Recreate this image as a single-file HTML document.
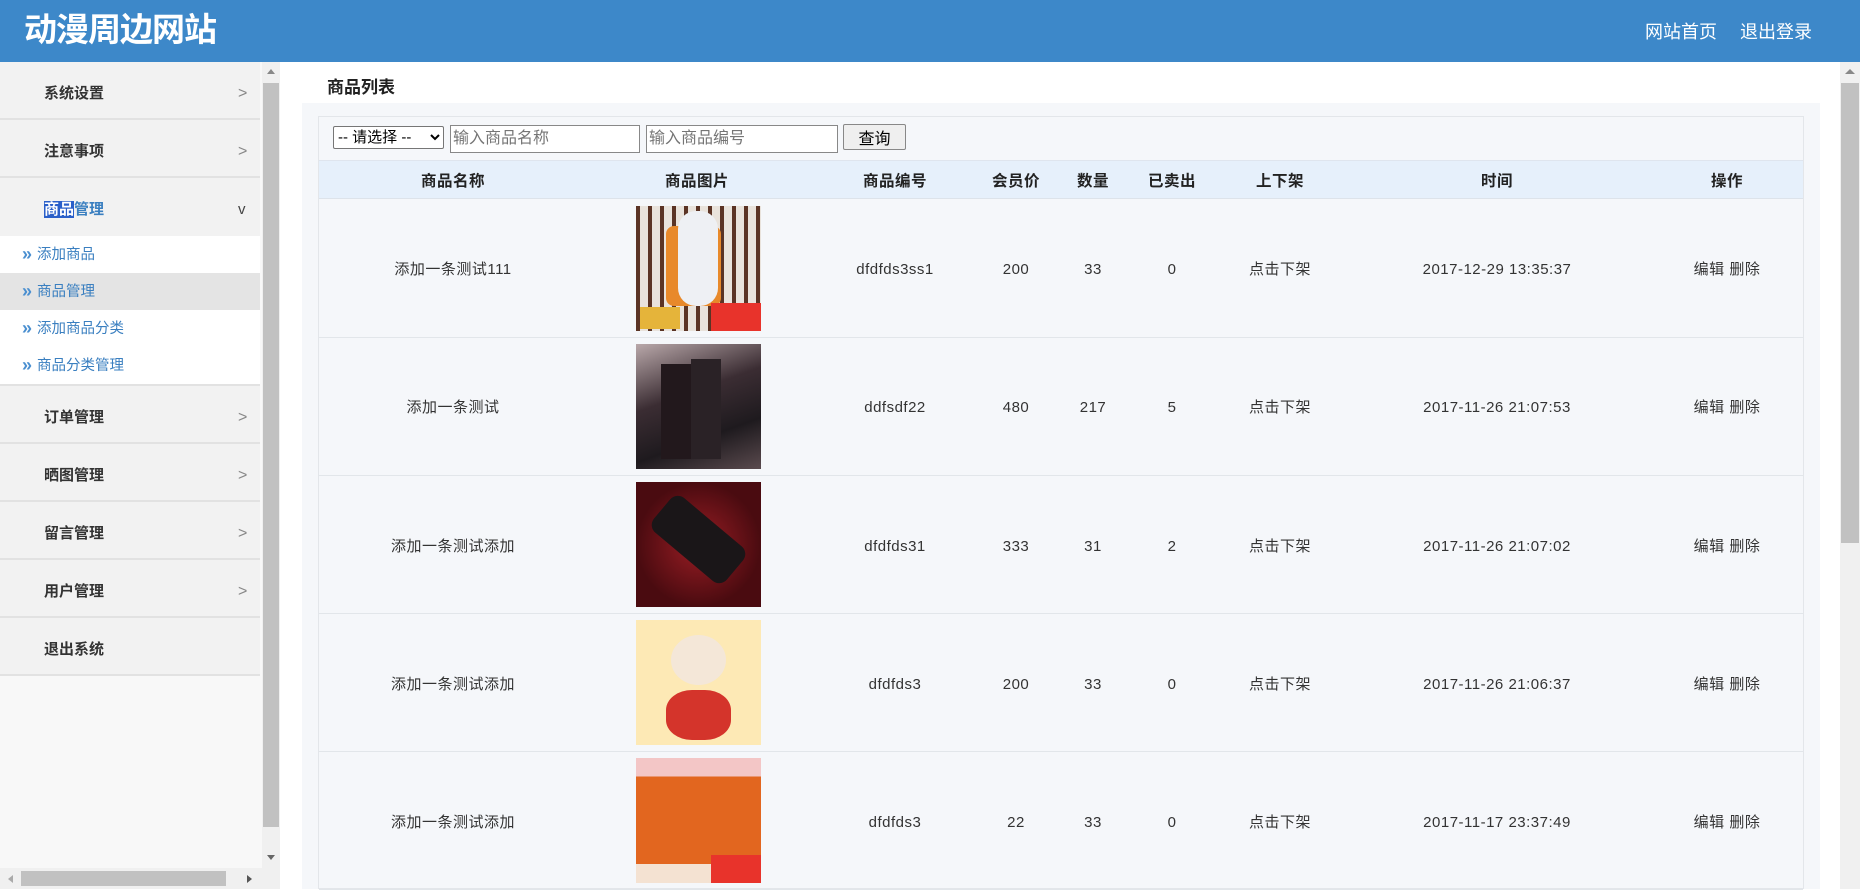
<!DOCTYPE html>
<html><head><meta charset="utf-8"><style>
*{margin:0;padding:0;box-sizing:border-box}
body{width:1860px;height:889px;overflow:hidden;background:#fff;font-family:"Liberation Sans","Noto Sans CJK SC",sans-serif;position:relative;color:#333}
.hd{position:absolute;left:0;top:0;width:1860px;height:62px;background:#3d88c9}
.logo{position:absolute;left:24px;top:8px;color:#fff;font-size:33px;line-height:44px;font-weight:bold;letter-spacing:-1px}
.nav{position:absolute;top:20px;color:#fff;font-size:18px;line-height:24px}
.side{position:absolute;left:0;top:62px;width:262px;height:806px;background:#f8f8f8}
.it{position:absolute;left:0;width:260px;height:58px;background:#f2f2f2;border-bottom:2px solid #e2e2e2;font-size:15px;color:#333;font-weight:bold}
.it span{position:absolute;left:44px;top:22px;line-height:20px}
.it i{position:absolute;left:238px;top:22px;line-height:20px;font-style:normal;color:#888;font-weight:normal;font-size:16px}
.sub{position:absolute;left:0;width:260px;height:37px;font-size:14.5px;color:#3a7fc0}
.sub span{position:absolute;left:37px;top:9px;line-height:20px}
.sub b{position:absolute;left:22px;top:8px;line-height:20px;font-size:18px;color:#4a8fd0}
.vs{position:absolute;left:262px;top:62px;width:18px;height:806px;background:#f0f0f0}
.hs{position:absolute;left:0;top:868px;width:280px;height:21px;background:#f0f0f0}
.ttl{position:absolute;left:327px;top:77px;line-height:22px;font-size:17px;font-weight:bold;color:#222}
.panel{position:absolute;left:302px;top:103px;width:1518px;height:786px;background:#f5f7fa}
.box{position:absolute;left:318px;top:116px;width:1486px;height:773px;border:1px solid #e3e6ea;background:#f5f7fa}
.thd{position:absolute;left:319px;top:160px;width:1484px;height:39px;background:#e6f0fb;border-top:1px solid #dfe5ee;border-bottom:1px solid #dde3ea}
.c{position:absolute;transform:translateX(-50%);white-space:nowrap;font-size:15px;line-height:20px;color:#333;letter-spacing:.5px}
.h{font-weight:bold;top:172px;font-size:15.5px;color:#222}
.row{position:absolute;left:319px;width:1484px;height:138px;border-bottom:1px solid #e2e6ea}
.img{position:absolute;left:636px;width:125px;height:125px;overflow:hidden}
.rs{position:absolute;left:1840px;top:62px;width:20px;height:827px;background:#f0f0f0}
input,select,button{font-family:"Liberation Sans","Noto Sans CJK SC",sans-serif}
</style></head><body>
<div class="hd"><div class="logo">动漫周边网站</div><div class="nav" style="left:1645px">网站首页</div><div class="nav" style="left:1740px">退出登录</div></div>
<div class="side">
<div class="it" style="top:0"><span>系统设置</span><i>&gt;</i></div>
<div class="it" style="top:58px"><span>注意事项</span><i>&gt;</i></div>
<div class="it" style="top:116px;border:none"><span><em style="font-style:normal;background:#2a5fc9;color:#fff">商品</em><em style="font-style:normal;color:#3a7fc0">管理</em></span><i style="font-size:15px;color:#444">v</i></div>
<div class="sub" style="top:174px;background:#fff"><b>»</b><span>添加商品</span></div>
<div class="sub" style="top:211px;background:#e4e4e4"><b>»</b><span>商品管理</span></div>
<div class="sub" style="top:248px;background:#fff"><b>»</b><span>添加商品分类</span></div>
<div class="sub" style="top:285px;background:#fff;height:39px;border-bottom:2px solid #e2e2e2"><b>»</b><span>商品分类管理</span></div>
<div class="it" style="top:324px"><span>订单管理</span><i>&gt;</i></div>
<div class="it" style="top:382px"><span>晒图管理</span><i>&gt;</i></div>
<div class="it" style="top:440px"><span>留言管理</span><i>&gt;</i></div>
<div class="it" style="top:498px"><span>用户管理</span><i>&gt;</i></div>
<div class="it" style="top:556px"><span>退出系统</span></div>
</div>
<div class="vs"><div style="position:absolute;left:1px;top:21px;width:16px;height:744px;background:#c1c1c1"></div><div style="position:absolute;left:5px;top:7px;border:4px solid transparent;border-bottom:5px solid #888;border-top:0"></div><div style="position:absolute;left:5px;top:793px;border:4px solid transparent;border-top:5px solid #666;border-bottom:0"></div></div>
<div class="hs"><div style="position:absolute;left:21px;top:3px;width:205px;height:15px;background:#c1c1c1"></div><div style="position:absolute;left:8px;top:7px;border:4px solid transparent;border-right:5px solid #aaa;border-left:0"></div><div style="position:absolute;left:247px;top:7px;border:4px solid transparent;border-left:5px solid #555;border-right:0"></div></div>
<div class="ttl">商品列表</div>
<div class="panel"></div>
<div class="box"></div>
<select style="position:absolute;left:333px;top:126px;width:111px;height:23px;font-size:15px;border:1px solid #767676;border-radius:2px;background:#fff;color:#000"><option>-- 请选择 --</option></select>
<input style="position:absolute;left:450px;top:125px;width:190px;height:28px;font-size:16px;border:1px solid #888;padding-left:2px" placeholder="输入商品名称">
<input style="position:absolute;left:646px;top:125px;width:192px;height:28px;font-size:16px;border:1px solid #888;padding-left:2px" placeholder="输入商品编号">
<button style="position:absolute;left:843px;top:124px;width:63px;height:26px;font-size:16px;border:1px solid #888;border-radius:2px;background:#efefef;color:#000">查询</button>
<div class="thd"></div>
<div class="c h" style="left:453px">商品名称</div><div class="c h" style="left:697px">商品图片</div><div class="c h" style="left:895px">商品编号</div><div class="c h" style="left:1016px">会员价</div><div class="c h" style="left:1093px">数量</div><div class="c h" style="left:1172px">已卖出</div><div class="c h" style="left:1280px">上下架</div><div class="c h" style="left:1497px">时间</div><div class="c h" style="left:1727px">操作</div>

<div class="row" style="top:200px"></div><div class="row" style="top:338px"></div><div class="row" style="top:476px"></div><div class="row" style="top:614px"></div><div class="row" style="top:752px"></div>

<div class="img" style="top:206px;background:repeating-linear-gradient(90deg,#5b3425 0 4px,#e9e3dc 4px 12px)"><div style="position:absolute;left:30px;top:20px;width:55px;height:80px;background:#e8892a;border-radius:8px"></div><div style="position:absolute;left:42px;top:5px;width:40px;height:95px;background:#eef0f4;border-radius:18px"></div><div style="position:absolute;right:0;bottom:0;width:50px;height:28px;background:#e8332b"></div><div style="position:absolute;left:4px;bottom:2px;width:40px;height:22px;background:#e5b43a"></div></div>
<div class="img" style="top:344px;background:linear-gradient(160deg,#b9a8aa,#3b2d33 40%,#1e1a1e 70%,#5a4a4e)"><div style="position:absolute;left:25px;top:20px;width:30px;height:95px;background:#22181c"></div><div style="position:absolute;left:55px;top:15px;width:30px;height:100px;background:#2a2226"></div></div>
<div class="img" style="top:482px;background:radial-gradient(circle at 50% 50%,#9a1d24,#4a0b10 70%)"><div style="position:absolute;left:15px;top:35px;width:95px;height:45px;background:#1a1618;transform:rotate(40deg);border-radius:10px"></div></div>
<div class="img" style="top:620px;background:#fde9b5"><div style="position:absolute;left:35px;top:15px;width:55px;height:50px;background:#f4e7d8;border-radius:50%"></div><div style="position:absolute;left:30px;top:70px;width:65px;height:50px;background:#d4342b;border-radius:40%"></div></div>
<div class="img" style="top:758px;background:linear-gradient(#f3c6c6 0 15%,#e2661f 15% 85%,#f4e2d2 85%)"><div style="position:absolute;right:0;bottom:0;width:50px;height:28px;background:#e8332b"></div></div>

<div class="c" style="left:453px;top:260px">添加一条测试111</div><div class="c" style="left:895px;top:260px">dfdfds3ss1</div><div class="c" style="left:1016px;top:260px">200</div><div class="c" style="left:1093px;top:260px">33</div><div class="c" style="left:1172px;top:260px">0</div><div class="c" style="left:1280px;top:260px">点击下架</div><div class="c" style="left:1497px;top:260px">2017-12-29 13:35:37</div><div class="c" style="left:1727px;top:260px">编辑 删除</div>
<div class="c" style="left:453px;top:398px">添加一条测试</div><div class="c" style="left:895px;top:398px">ddfsdf22</div><div class="c" style="left:1016px;top:398px">480</div><div class="c" style="left:1093px;top:398px">217</div><div class="c" style="left:1172px;top:398px">5</div><div class="c" style="left:1280px;top:398px">点击下架</div><div class="c" style="left:1497px;top:398px">2017-11-26 21:07:53</div><div class="c" style="left:1727px;top:398px">编辑 删除</div>
<div class="c" style="left:453px;top:537px">添加一条测试添加</div><div class="c" style="left:895px;top:537px">dfdfds31</div><div class="c" style="left:1016px;top:537px">333</div><div class="c" style="left:1093px;top:537px">31</div><div class="c" style="left:1172px;top:537px">2</div><div class="c" style="left:1280px;top:537px">点击下架</div><div class="c" style="left:1497px;top:537px">2017-11-26 21:07:02</div><div class="c" style="left:1727px;top:537px">编辑 删除</div>
<div class="c" style="left:453px;top:675px">添加一条测试添加</div><div class="c" style="left:895px;top:675px">dfdfds3</div><div class="c" style="left:1016px;top:675px">200</div><div class="c" style="left:1093px;top:675px">33</div><div class="c" style="left:1172px;top:675px">0</div><div class="c" style="left:1280px;top:675px">点击下架</div><div class="c" style="left:1497px;top:675px">2017-11-26 21:06:37</div><div class="c" style="left:1727px;top:675px">编辑 删除</div>
<div class="c" style="left:453px;top:813px">添加一条测试添加</div><div class="c" style="left:895px;top:813px">dfdfds3</div><div class="c" style="left:1016px;top:813px">22</div><div class="c" style="left:1093px;top:813px">33</div><div class="c" style="left:1172px;top:813px">0</div><div class="c" style="left:1280px;top:813px">点击下架</div><div class="c" style="left:1497px;top:813px">2017-11-17 23:37:49</div><div class="c" style="left:1727px;top:813px">编辑 删除</div>

<div class="rs"><div style="position:absolute;left:1px;top:21px;width:18px;height:460px;background:#c1c1c1"></div><div style="position:absolute;left:5px;top:7px;border:5px solid transparent;border-bottom:5px solid #888;border-top:0"></div></div>
</body></html>
